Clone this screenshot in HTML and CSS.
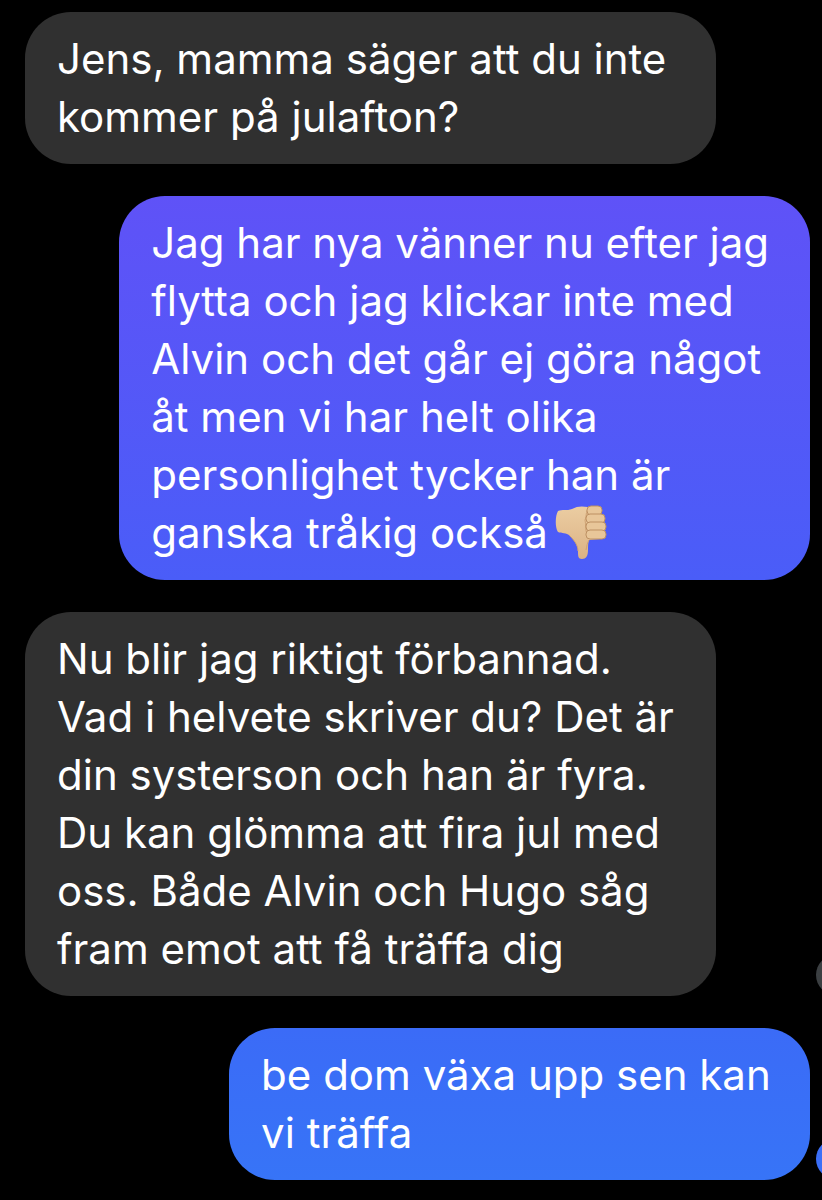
FILE: index.html
```
<!DOCTYPE html>
<html lang="sv">
<head>
  <meta charset="UTF-8" />
  <meta name="viewport" content="width=device-width, initial-scale=1">
  <title>Chatt</title>
  <link rel="stylesheet" href="styles.css">
</head>
<body>
  <main class="chat">
    <div class="row">
      <p class="bubble received">Jens, mamma säger att du inte<br>kommer på julafton?</p>
    </div>

    <div class="row own">
      <p class="bubble sent-top">Jag har nya vänner nu efter jag<br>flytta och jag klickar inte med<br>Alvin och det går ej göra något<br>åt men vi har helt olika<br>personlighet tycker han är<br>ganska tråkig också<svg class="thumb" viewBox="0 0 54 56" aria-hidden="true">
        <defs>
          <linearGradient id="skin" x1="0" y1="0" x2="0" y2="1">
            <stop offset="0" stop-color="#ebcda2"/>
            <stop offset="1" stop-color="#dcb284"/>
          </linearGradient>
        </defs>
        <path fill="url(#skin)" d="M4 7C8 5 13 7 18 5C23 2 28 2 34 3L44 4L46 35L35 36C34 39 34 42 34 46C34 52 32 55 28 55C24 55 24 52 24 47C24 41 20 36 16 32C12 28 8 30 4 28C1 24 1 12 4 7Z"/>
        <path fill="none" stroke="#cfa273" stroke-width="1" d="M16 32C20 36 24 41 24 47M35 36C33 39 33 42 32 46M35 4C31 8 33 12 31 16C32 20 31 25 33 31"/>
        <g fill="#e8c699" stroke="#bd9062" stroke-width="1">
          <rect x="33" y="2" width="15" height="9" rx="4"/>
          <rect x="32" y="10" width="19" height="9" rx="4"/>
          <rect x="32" y="18" width="20" height="9" rx="4"/>
          <rect x="32" y="26" width="20" height="9" rx="4"/>
        </g>
      </svg></p>
    </div>

    <div class="row">
      <p class="bubble received">Nu blir jag riktigt förbannad.<br>Vad i helvete skriver du? Det är<br>din systerson och han är fyra.<br>Du kan glömma att fira jul med<br>oss. Både Alvin och Hugo såg<br>fram emot att få träffa dig</p>
      <span class="status seen"></span>
    </div>

    <div class="row own">
      <p class="bubble sent-bottom">be dom växa upp sen kan<br>vi träffa</p>
      <span class="status delivered"></span>
    </div>
  </main>
</body>
</html>
```
FILE: styles.css
```
body {
  margin: 0;
  background: #000;
  color: #fff;
  font-family: Inter, "Liberation Sans", sans-serif;
  font-size: 42px;
  line-height: 58px;
}
.chat {
  display: flex;
  flex-direction: column;
  gap: 32px;
  padding: 12px 12px 20px 25px;
  overflow: hidden;
}
.row {
  position: relative;
  display: flex;
}
.row.own {
  justify-content: flex-end;
}
.bubble {
  box-sizing: border-box;
  width: 88%;
  margin: 0;
  padding: 18px 32px;
  border-radius: 46px;
  white-space: nowrap;
}
.received {
  background: #303030;
}
.sent-top {
  background: linear-gradient(#5f52f7, #4a5df8);
}
.sent-bottom {
  width: 74%;
  background: linear-gradient(#3b6bf7, #3774f7);
}
.thumb {
  width: 54px;
  height: 56px;
  margin-left: 6px;
  vertical-align: -12px;
}
/* read receipts, partly outside the right edge */
.status {
  position: absolute;
  right: -46px;
  bottom: 1px;
  width: 40px;
  height: 40px;
  border-radius: 50%;
}
.seen {
  background: #3b3f42;
}
.delivered {
  background: #3b6ff7;
}
```
